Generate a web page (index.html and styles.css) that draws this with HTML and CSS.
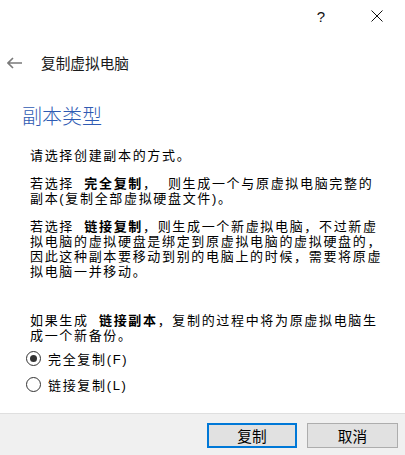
FILE: index.html
```html
<!DOCTYPE html>
<html lang="zh-CN">
  <head>
    <meta charset="UTF-8" />
    <meta name="viewport" content="width=device-width, initial-scale=1.0" />
    <title>复制虚拟电脑</title>
    <link rel="stylesheet" href="styles.css">
  </head>
  <body>
    <div class="dialog">
      <div class="titlebar">
        <div class="title-button">?</div>
        <div class="title-button">
          <svg class="close-icon" viewBox="0 0 12 12">
            <path d="M0.5 0.5 L11.5 11.5 M11.5 0.5 L0.5 11.5" stroke="#111" stroke-width="1" fill="none"></path>
          </svg>
        </div>
      </div>

      <div class="header">
        <svg class="back-icon" viewBox="0 0 16 12">
          <path d="M1 6 H15 M6 1 L1 6 L6 11" stroke="#7a7a7a" stroke-width="1.6" fill="none"></path>
        </svg>
        <span class="header-title">复制虚拟电脑</span>
      </div>

      <div class="page-heading">副本类型</div>

      <div class="content">
        <p>请选择创建副本的方式。</p>
        <p>若选择 <b>完全复制</b>， 则生成一个与原虚拟电脑完整的<br>副本(复制全部虚拟硬盘文件)。</p>
        <p>若选择 <b>链接复制</b>，则生成一个新虚拟电脑，不过新虚<br>拟电脑的虚拟硬盘是绑定到原虚拟电脑的虚拟硬盘的，<br>因此这种副本要移动到别的电脑上的时候，需要将原虚<br>拟电脑一并移动。</p>
        <p class="last">如果生成 <b>链接副本</b>，复制的过程中将为原虚拟电脑生<br>成一个新备份。</p>

        <div class="options">
          <label class="option">
            <span class="radio checked"></span>
            <span>完全复制(F)</span>
          </label>
          <label class="option">
            <span class="radio"></span>
            <span>链接复制(L)</span>
          </label>
        </div>
      </div>

      <div class="footer">
        <div class="button default-button">复制</div>
        <div class="button">取消</div>
      </div>
    </div>
  </body>
</html>
```

FILE: styles.css
```css
body {
  margin: 0;
  background: #fff;
  color: #000;
  font-family: "Noto Sans CJK SC", "Liberation Sans", sans-serif;
  font-size: 14.67px;
}

.dialog {
  width: 405px;
  height: 455px;
  display: flex;
  flex-direction: column;
  overflow: hidden;
}

.titlebar {
  height: 32px;
  display: flex;
  justify-content: flex-end;
}

.title-button {
  width: 56px;
  height: 32px;
  display: flex;
  justify-content: center;
  align-items: center;
  font-family: "Liberation Sans", sans-serif;
  font-size: 15px;
  color: #111;
}

.close-icon {
  width: 12px;
  height: 12px;
}

.header {
  height: 30px;
  margin-top: 16px;
  padding-left: 7px;
  display: flex;
  align-items: center;
}

.back-icon {
  width: 16px;
  height: 12px;
}

.header-title {
  margin-left: 18px;
  color: #1a1a1a;
  line-height: 30px;
}

.page-heading {
  margin: 24px 0 0 22px;
  font-size: 20px;
  font-weight: 300;
  line-height: 28px;
  color: #2f5bb3;
}

/* Latin font first so the line boxes stay as tight as the original dialog */
.content {
  padding: 0 10px 0 30px;
  font-family: "Liberation Sans", "Noto Sans CJK SC", sans-serif;
  font-size: 13px;
  letter-spacing: 1.67px;
  word-spacing: 5px;
}

.content p {
  margin: 13px 0 0;
  line-height: 15px;
}

.content p:first-child {
  margin-top: 18px;
}

.content p.last {
  margin-top: 34px;
}

.content b {
  font-weight: bold;
}

.options {
  margin-top: 5px;
  display: flex;
  flex-direction: column;
  gap: 6px;
  word-spacing: normal;
}

.option {
  height: 20px;
  display: flex;
  align-items: center;
  gap: 7px;
  margin-left: -4px;
}

.radio {
  width: 13px;
  height: 13px;
  border: 1px solid #333;
  border-radius: 50%;
  display: flex;
  justify-content: center;
  align-items: center;
}

.radio.checked::after {
  content: "";
  width: 7px;
  height: 7px;
  border-radius: 50%;
  background: #333;
}

.footer {
  margin-top: auto;
  height: 42px;
  border-top: 1px solid #dfdfdf;
  background: #f0f0f0;
  display: flex;
  justify-content: flex-end;
  align-items: flex-start;
  gap: 10px;
  padding: 9px 7px 0 0;
  box-sizing: border-box;
}

.button {
  width: 89px;
  height: 23px;
  border: 1px solid #adadad;
  background: #e1e1e1;
  display: flex;
  justify-content: center;
  align-items: center;
}

.default-button {
  width: 86px;
  height: 21px;
  border: 2px solid #0078d7;
}
```
